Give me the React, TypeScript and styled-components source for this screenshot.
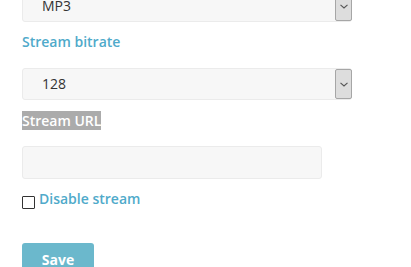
import styled, { createGlobalStyle } from 'styled-components';

const GlobalStyle = createGlobalStyle`
  html, body {
    margin: 0;
    padding: 0;
    background: #ffffff;
  }
  body {
    font-family: 'Open Sans', 'Liberation Sans', sans-serif;
    color: #333333;
    overflow: hidden;
  }
`;

const Form = styled.form`
  display: flex;
  flex-direction: column;
  padding-left: 22px;
  margin-top: -10px;
`;

const Field = styled.div<{ $gap?: number }>`
  display: flex;
  flex-direction: column;
  margin-top: ${(p) => p.$gap ?? 0}px;
`;

const Label = styled.label<{ $space: number }>`
  display: block;
  font-size: 14px;
  font-weight: 600;
  line-height: 20px;
  height: 20px;
  margin-bottom: ${(p) => p.$space}px;
  color: #4faaca;
`;

const Selected = styled.span`
  background: #ababab;
  color: #ffffff;
  padding: 0;
`;

const SelectBox = styled.div<{ $width: number }>`
  display: flex;
  align-items: stretch;
  box-sizing: border-box;
  width: ${(p) => p.$width}px;
  height: 32px;
  border: 1px solid #ebebeb;
  border-radius: 3px;
  background: #f7f7f7;
`;

const SelectValue = styled.span`
  flex: 1;
  padding-left: 19px;
  font-size: 14px;
  line-height: 30px;
  color: #333333;
`;

const ArrowButton = styled.span`
  display: flex;
  align-items: center;
  justify-content: center;
  box-sizing: border-box;
  width: 17px;
  margin-right: -1px;
  border: 1px solid #a6a6a6;
  border-radius: 2px;
  background: #dddddd;
`;

const TextInput = styled.input`
  box-sizing: border-box;
  width: 300px;
  height: 33px;
  margin: 0;
  border: 1px solid #ebebeb;
  border-radius: 3px;
  background: #f7f7f7;
  outline: none;
`;

const CheckRow = styled.div`
  display: flex;
  align-items: flex-start;
  margin-top: 12px;
  height: 22px;
`;

const Box = styled.span`
  display: inline-block;
  box-sizing: border-box;
  width: 13px;
  height: 13px;
  margin-top: 5px;
  border: 1px solid #333333;
  border-radius: 1px;
  background: #ffffff;
`;

const CheckLabel = styled.label`
  margin-left: 4px;
  font-size: 14px;
  font-weight: 600;
  line-height: 16px;
  color: #4faaca;
`;

const SaveButton = styled.button`
  align-self: flex-start;
  margin-top: 30px;
  width: 72px;
  height: 34px;
  padding: 0;
  border: none;
  border-radius: 3px;
  background: #6bb8cc;
  color: #ffffff;
  font-family: 'Open Sans', 'Liberation Sans', sans-serif;
  font-size: 14px;
  font-weight: 700;
  line-height: 34px;
`;

function Chevron() {
  return (
    <svg width="8" height="5" viewBox="0 0 8 5">
      <path d="M0.5 0.8 L4 4 L7.5 0.8" fill="none" stroke="#555555" strokeWidth="1.1" />
    </svg>
  );
}

function Select({ value }: { value: string }) {
  return (
    <SelectBox $width={330}>
      <SelectValue>{value}</SelectValue>
      <ArrowButton>
        <Chevron />
      </ArrowButton>
    </SelectBox>
  );
}

export default function App() {
  return (
    <>
      <GlobalStyle />
      <Form onSubmit={(e) => e.preventDefault()}>
        <Select value="MP3" />
        <Field $gap={10}>
          <Label $space={16}>Stream bitrate</Label>
          <Select value="128" />
        </Field>
        <Field $gap={11}>
          <Label $space={15}>
            <Selected>Stream URL</Selected>
          </Label>
          <TextInput type="text" />
        </Field>
        <CheckRow>
          <Box />
          <CheckLabel>Disable stream</CheckLabel>
        </CheckRow>
        <SaveButton type="submit">Save</SaveButton>
      </Form>
    </>
  );
}
